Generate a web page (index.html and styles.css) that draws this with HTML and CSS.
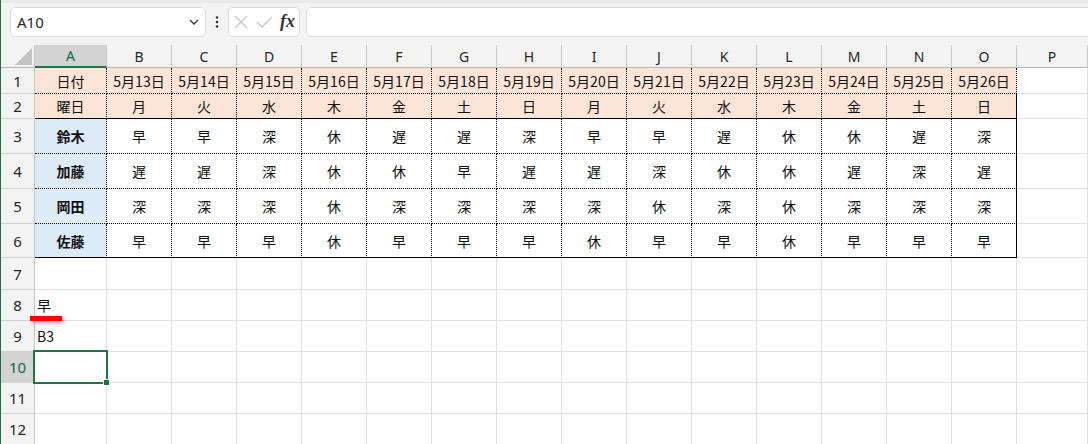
FILE: index.html
```html
<!DOCTYPE html>
<html lang="ja">
<head>
<meta charset="utf-8">
<title>Sheet</title>
<link rel="stylesheet" href="styles.css">
</head>
<body>
<div class="app">
  <div class="toolbar">
    <div class="namebox">
      <span class="ref">A10</span>
      <svg class="chev" width="10" height="6" viewBox="0 0 10 6"><path d="M1 1 L5 5 L9 1" fill="none" stroke="#333" stroke-width="1.3"/></svg>
    </div>
    <div class="dots">
      <svg width="4" height="12" viewBox="0 0 4 12"><circle cx="2" cy="1.5" r="1.3" fill="#333"/><circle cx="2" cy="6" r="1.3" fill="#333"/><circle cx="2" cy="10.5" r="1.3" fill="#333"/></svg>
    </div>
    <div class="fxbox">
      <svg class="ic-x" width="14" height="14" viewBox="0 0 14 14"><path d="M1 1 L13 13 M13 1 L1 13" fill="none" stroke="#c4c4c4" stroke-width="1.3"/></svg>
      <svg class="ic-ok" width="17" height="12" viewBox="0 0 17 12"><path d="M1 6 L6 11 L16 1" fill="none" stroke="#c4c4c4" stroke-width="1.3"/></svg>
      <span class="fx">fx</span>
    </div>
    <div class="formula"></div>
  </div>

  <div class="sheet">
    <!-- header row -->
    <div class="corner"><svg width="17" height="17" viewBox="0 0 17 17"><polygon points="17,0 17,17 0,17" fill="#c3c3c3"/></svg></div>
    <div class="ch sel">A</div><div class="ch">B</div><div class="ch">C</div><div class="ch">D</div><div class="ch">E</div><div class="ch">F</div><div class="ch">G</div><div class="ch">H</div><div class="ch">I</div><div class="ch">J</div><div class="ch">K</div><div class="ch">L</div><div class="ch">M</div><div class="ch">N</div><div class="ch">O</div><div class="ch">P</div>

    <!-- row 1 -->
    <div class="rh">1</div>
    <div class="c hd">日付</div><div class="c hd">5月13日</div><div class="c hd">5月14日</div><div class="c hd">5月15日</div><div class="c hd">5月16日</div><div class="c hd">5月17日</div><div class="c hd">5月18日</div><div class="c hd">5月19日</div><div class="c hd">5月20日</div><div class="c hd">5月21日</div><div class="c hd">5月22日</div><div class="c hd">5月23日</div><div class="c hd">5月24日</div><div class="c hd">5月25日</div><div class="c hd">5月26日</div><div class="c"></div>

    <!-- row 2 -->
    <div class="rh">2</div>
    <div class="c hd bb">曜日</div><div class="c hd bb">月</div><div class="c hd bb">火</div><div class="c hd bb">水</div><div class="c hd bb">木</div><div class="c hd bb">金</div><div class="c hd bb">土</div><div class="c hd bb">日</div><div class="c hd bb">月</div><div class="c hd bb">火</div><div class="c hd bb">水</div><div class="c hd bb">木</div><div class="c hd bb">金</div><div class="c hd bb">土</div><div class="c hd bb br">日</div><div class="c"></div>

    <!-- row 3 -->
    <div class="rh">3</div>
    <div class="c d nm">鈴木</div><div class="c d">早</div><div class="c d">早</div><div class="c d">深</div><div class="c d">休</div><div class="c d">遅</div><div class="c d">遅</div><div class="c d">深</div><div class="c d">早</div><div class="c d">早</div><div class="c d">遅</div><div class="c d">休</div><div class="c d">休</div><div class="c d">遅</div><div class="c d br">深</div><div class="c"></div>

    <!-- row 4 -->
    <div class="rh">4</div>
    <div class="c d nm">加藤</div><div class="c d">遅</div><div class="c d">遅</div><div class="c d">深</div><div class="c d">休</div><div class="c d">休</div><div class="c d">早</div><div class="c d">遅</div><div class="c d">遅</div><div class="c d">深</div><div class="c d">休</div><div class="c d">休</div><div class="c d">遅</div><div class="c d">深</div><div class="c d br">遅</div><div class="c"></div>

    <!-- row 5 -->
    <div class="rh">5</div>
    <div class="c d nm">岡田</div><div class="c d">深</div><div class="c d">深</div><div class="c d">深</div><div class="c d">休</div><div class="c d">深</div><div class="c d">深</div><div class="c d">深</div><div class="c d">深</div><div class="c d">休</div><div class="c d">深</div><div class="c d">休</div><div class="c d">深</div><div class="c d">深</div><div class="c d br">深</div><div class="c"></div>

    <!-- row 6 -->
    <div class="rh">6</div>
    <div class="c d bb nm">佐藤</div><div class="c d bb">早</div><div class="c d bb">早</div><div class="c d bb">早</div><div class="c d bb">休</div><div class="c d bb">早</div><div class="c d bb">早</div><div class="c d bb">早</div><div class="c d bb">休</div><div class="c d bb">早</div><div class="c d bb">早</div><div class="c d bb">休</div><div class="c d bb">早</div><div class="c d bb">早</div><div class="c d bb br">早</div><div class="c"></div>

    <!-- row 7 -->
    <div class="rh">7</div>
    <div class="c"></div><div class="c"></div><div class="c"></div><div class="c"></div><div class="c"></div><div class="c"></div><div class="c"></div><div class="c"></div><div class="c"></div><div class="c"></div><div class="c"></div><div class="c"></div><div class="c"></div><div class="c"></div><div class="c"></div><div class="c"></div>

    <!-- row 8 -->
    <div class="rh">8</div>
    <div class="c lt">早</div><div class="c"></div><div class="c"></div><div class="c"></div><div class="c"></div><div class="c"></div><div class="c"></div><div class="c"></div><div class="c"></div><div class="c"></div><div class="c"></div><div class="c"></div><div class="c"></div><div class="c"></div><div class="c"></div><div class="c"></div>

    <!-- row 9 -->
    <div class="rh">9</div>
    <div class="c lt">B3</div><div class="c"></div><div class="c"></div><div class="c"></div><div class="c"></div><div class="c"></div><div class="c"></div><div class="c"></div><div class="c"></div><div class="c"></div><div class="c"></div><div class="c"></div><div class="c"></div><div class="c"></div><div class="c"></div><div class="c"></div>

    <!-- row 10 -->
    <div class="rh sel">10</div>
    <div class="c"></div><div class="c"></div><div class="c"></div><div class="c"></div><div class="c"></div><div class="c"></div><div class="c"></div><div class="c"></div><div class="c"></div><div class="c"></div><div class="c"></div><div class="c"></div><div class="c"></div><div class="c"></div><div class="c"></div><div class="c"></div>

    <!-- row 11 -->
    <div class="rh">11</div>
    <div class="c"></div><div class="c"></div><div class="c"></div><div class="c"></div><div class="c"></div><div class="c"></div><div class="c"></div><div class="c"></div><div class="c"></div><div class="c"></div><div class="c"></div><div class="c"></div><div class="c"></div><div class="c"></div><div class="c"></div><div class="c"></div>

    <!-- row 12 -->
    <div class="rh">12</div>
    <div class="c"></div><div class="c"></div><div class="c"></div><div class="c"></div><div class="c"></div><div class="c"></div><div class="c"></div><div class="c"></div><div class="c"></div><div class="c"></div><div class="c"></div><div class="c"></div><div class="c"></div><div class="c"></div><div class="c"></div><div class="c"></div>
  </div>

  <div class="active-cell"></div>
  <div class="fill-handle"></div>
  <div class="red-mark"></div>
</div>
</body>
</html>
```

FILE: styles.css
```css
html, body {
  margin: 0;
  padding: 0;
  background: #ffffff;
}

.app {
  position: relative;
  width: 1088px;
  height: 444px;
  box-sizing: border-box;
  border-left: 1px solid #1e7145;
  overflow: hidden;
  font-family: "Noto Sans CJK JP", "Noto Sans", sans-serif;
  color: #111;
}

/* ---------- formula bar ---------- */
.toolbar {
  display: flex;
  align-items: flex-start;
  height: 45px;
  box-sizing: border-box;
  padding: 7px 0 0 9px;
  background: linear-gradient(#e9e9e9 0, #e9e9e9 3px, #f3f3f3 3px);
}

.namebox {
  display: flex;
  align-items: center;
  justify-content: space-between;
  width: 196px;
  height: 30px;
  box-sizing: border-box;
  padding: 0 6px 0 6px;
  background: #fff;
  border: 1px solid #dcdcdc;
  border-radius: 5px;
}

.ref {
  font-family: "Noto Sans", sans-serif;
  font-size: 15px;
  color: #262626;
}

.dots {
  display: flex;
  align-items: center;
  justify-content: center;
  width: 22px;
  height: 30px;
}

.fxbox {
  display: flex;
  align-items: center;
  width: 72px;
  height: 30px;
  box-sizing: border-box;
  padding-left: 5px;
  background: #fff;
  border: 1px solid #dcdcdc;
  border-radius: 5px;
}

.ic-x {
  margin-right: 8px;
}

.ic-ok {
  margin-right: 7px;
}

.fx {
  font-family: "Liberation Serif", serif;
  font-style: italic;
  font-weight: bold;
  font-size: 18px;
  color: #333;
  margin-top: -2px;
}

.formula {
  flex: 1;
  height: 30px;
  margin-left: 6px;
  margin-right: -10px;
  box-sizing: border-box;
  background: #fff;
  border: 1px solid #dcdcdc;
  border-radius: 5px;
}

/* ---------- sheet grid ---------- */
.sheet {
  display: grid;
  grid-template-columns: 34px 72px repeat(14, 65px) 1fr;
  grid-template-rows: 23px 26px 25px 35px 35px 35px 34px 32px 31px 31px 31px 31px 31px;
  background: #fff;
}

.sheet > div {
  box-sizing: border-box;
  display: flex;
  align-items: center;
  justify-content: center;
  overflow: hidden;
  white-space: nowrap;
}

.corner {
  background: #f3f3f3;
  border-right: 1px solid #c6c6c6;
  border-bottom: 1px solid #b5b5b5;
  align-items: flex-end !important;
  justify-content: flex-end !important;
  padding: 0 2px 2px 0;
}

.ch {
  background: #f3f3f3;
  border-right: 1px solid #c9c9c9;
  border-bottom: 1px solid #b5b5b5;
  font-family: "Noto Sans", sans-serif;
  font-size: 14px;
  color: #262626;
}

.ch.sel {
  background: #d3d3d3;
  color: #116b3a;
  border-bottom: 2px solid #217346;
}

.rh {
  background: #f3f3f3;
  border-right: 1px solid #c6c6c6;
  border-bottom: 1px solid #d2d2d2;
  font-family: "Noto Sans", sans-serif;
  font-size: 15px;
  color: #262626;
}

.rh.sel {
  background: #d3d3d3;
  color: #116b3a;
}

.c {
  border-right: 1px solid #e1e1e1;
  border-bottom: 1px solid #e1e1e1;
  font-size: 14px;
}

.hd {
  background: #fce4d6;
  border-right: 1px dotted #000;
  border-bottom: 1px dotted #000;
}

.d {
  border-right: 1px dotted #000;
  border-bottom: 1px dotted #000;
}

.bb {
  border-bottom: 1px solid #000;
}

.br {
  border-right: 1px solid #000;
}

.nm {
  background: #ddebf7;
  font-weight: bold;
}

.lt {
  justify-content: flex-start !important;
  padding-left: 2px;
}

/* ---------- overlays ---------- */
.active-cell {
  position: absolute;
  left: 32px;
  top: 350px;
  width: 75px;
  height: 34px;
  box-sizing: border-box;
  border: 2px solid #217346;
}

.fill-handle {
  position: absolute;
  left: 102px;
  top: 379px;
  width: 7px;
  height: 7px;
  box-sizing: border-box;
  background: #217346;
  border: 1px solid #fff;
}

.red-mark {
  position: absolute;
  left: 29px;
  top: 316px;
  width: 32px;
  height: 5px;
  background: #ff0000;
  box-shadow: 2px 2px 4px rgba(0, 0, 0, 0.35);
}
```
